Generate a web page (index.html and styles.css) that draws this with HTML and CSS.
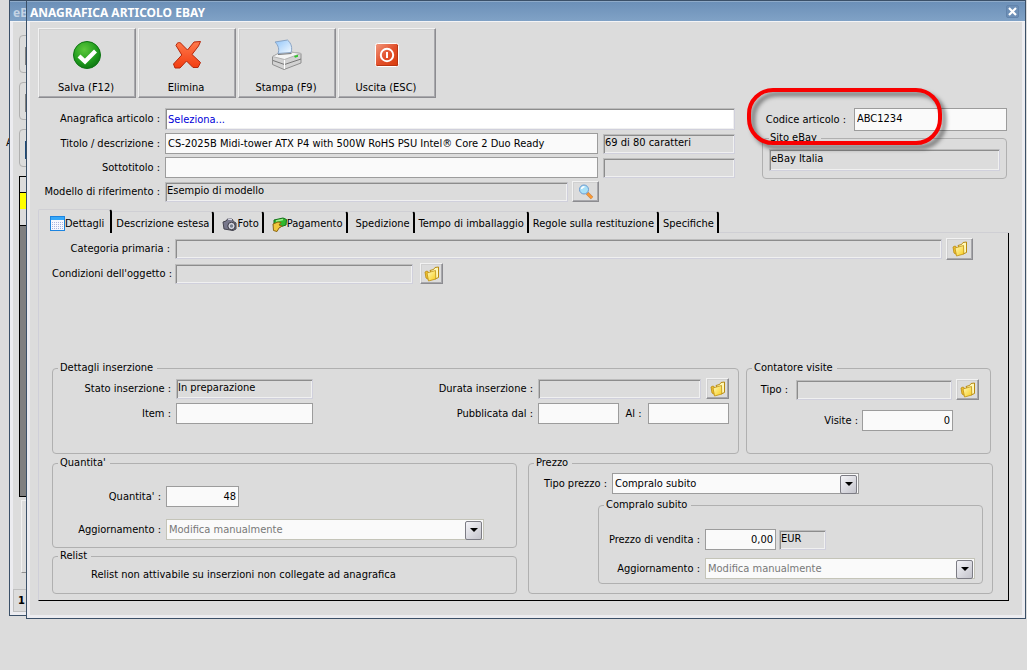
FILE: index.html
```html
<!DOCTYPE html>
<html lang="it">
<head>
  <meta charset="UTF-8">
  <title>Anagrafica articolo eBay</title>
  <link rel="stylesheet" href="styles.css">
</head>
<body>
  <svg class="defs" aria-hidden="true">
    <defs>
      <linearGradient id="gold" x1="0" y1="0" x2="1" y2="1">
        <stop offset="0" stop-color="#fffbc0"/>
        <stop offset="1" stop-color="#f8cc18"/>
      </linearGradient>
      <radialGradient id="green" cx="0.4" cy="0.3" r="0.8">
        <stop offset="0" stop-color="#5cc83c"/>
        <stop offset="0.6" stop-color="#1e9a1c"/>
        <stop offset="1" stop-color="#0a6a10"/>
      </radialGradient>
      <linearGradient id="red" x1="0" y1="0" x2="1" y2="1">
        <stop offset="0" stop-color="#f29a80"/>
        <stop offset="0.5" stop-color="#e2512c"/>
        <stop offset="1" stop-color="#d83a08"/>
      </linearGradient>
      <linearGradient id="cross" x1="0" y1="0" x2="0" y2="1">
        <stop offset="0" stop-color="#ff7a4c"/>
        <stop offset="1" stop-color="#f23c10"/>
      </linearGradient>
      <linearGradient id="sheet" x1="0" y1="0" x2="1" y2="1">
        <stop offset="0" stop-color="#8fc4fa"/>
        <stop offset="1" stop-color="#f4faff"/>
      </linearGradient>
    </defs>
    <symbol id="folder" viewBox="0 0 16 16">
      <path d="M1 6l2-1 1.500 1v7.500L2 12z" fill="#f0c030" stroke="#b88a10" stroke-width="0.800"/>
      <path d="M6 4.500L9.500 3.500l1.500-2L14.500 1v10.500L11 13z" fill="#fff8b8" stroke="#b88a10"/>
      <path d="M3 7l8.500-2.500.3 8.500L4.500 15z" fill="url(#gold)" stroke="#c09010" stroke-width="0.800"/>
    </symbol>
  </svg>

  <div class="desktop">
    <span class="desktop-text">A</span>

    <div class="window back">
      <div class="titlebar">eB</div>
      <div class="back-body">
        <div class="back-box"><i></i></div>
        <div class="back-box"><i></i></div>
        <div class="back-box"><i class="blue"></i></div>
        <div class="back-grid">
          <div class="head"></div>
          <div class="sel"></div>
          <div class="line"></div>
        </div>
        <div class="back-frame"></div>
      </div>
      <div class="back-status">1</div>
    </div>

    <div class="window front">
      <div class="titlebar">
        <h1>ANAGRAFICA ARTICOLO EBAY</h1>
        <button class="close" aria-label="Chiudi">
          <svg width="9" height="9" viewBox="0 0 9 9"><path d="M1 1l7 7M8 1L1 8" stroke="#fff" stroke-width="2.200"/></svg>
        </button>
      </div>

      <div class="content">
        <div class="toolbar">
          <button>
            <svg width="32" height="32" viewBox="0 0 32 32">
              <circle cx="17" cy="16" r="13.500" fill="url(#green)" stroke="#0d7412"/>
              <path d="M9 17L15 22.500 25.500 12" fill="none" stroke="#fff" stroke-width="4.200"/>
            </svg>
            Salva (F12)
          </button>
          <button>
            <svg width="32" height="32" viewBox="0 0 32 32">
              <path d="M7 4.500c2-1.800 4-.8 5.300 1.300L17.500 11 24 3l6.500-.5-2 4.500-6.500 8.500 8.500 8-2.500 5h-5l-6.500-6.500-6.500 7H5L3.500 25l8.300-9L6 6.500z" fill="url(#cross)" stroke="#b5260a"/>
            </svg>
            Elimina
          </button>
          <button>
            <svg width="32" height="32" viewBox="0 0 32 32">
              <path d="M2.500 17.500L13 12l18 2.500V24L14 30.500 2.500 25.500z" fill="#d2d2d2" stroke="#8e8e8e"/>
              <path d="M2.500 17.500L13 12l18 2.500-16.500 6z" fill="#f4f4f4" stroke="#b4b4b4"/>
              <path d="M3 21.500l11.500 4L31 20" fill="none" stroke="#777"/>
              <path d="M14.500 21v9" stroke="#fff"/>
              <path d="M8 14.500c1.500-4 .5-8-3-11.500L17.500 1c4 3.500 5 8 3.500 12.500z" fill="url(#sheet)" stroke="#8aa4c4"/>
              <path d="M8 15.500l13.500-1" stroke="#777"/>
              <path d="M24 17l4-1.200v2l-3 1z" fill="#2fc52a"/>
            </svg>
            Stampa (F9)
          </button>
          <button>
            <svg width="32" height="32" viewBox="0 0 32 32">
              <rect x="5.500" y="4.500" width="23" height="23" rx="2" fill="url(#red)" stroke="#fff"/>
              <path d="M6.500 26.500h21V6" fill="none" stroke="#b03010" stroke-width="0.800"/>
              <circle cx="17" cy="16" r="6.200" fill="none" stroke="#fff" stroke-width="2"/>
              <path d="M17 13v6" stroke="#fff" stroke-width="2"/>
            </svg>
            Uscita (ESC)
          </button>
        </div>

        <div class="header">
          <div class="header-main">
            <div class="row">
              <label for="anagrafica">Anagrafica articolo :</label>
              <input id="anagrafica" class="sunken pick grow" value="Seleziona..." readonly>
            </div>
            <div class="row">
              <label for="titolo">Titolo / descrizione :</label>
              <input id="titolo" class="grow" value="CS-2025B Midi-tower ATX P4 with 500W RoHS PSU Intel® Core 2 Duo Ready">
              <input class="sunken counter" value="69 di 80 caratteri" aria-label="Caratteri titolo" readonly>
            </div>
            <div class="row">
              <label for="sottotitolo">Sottotitolo :</label>
              <input id="sottotitolo" class="grow">
              <input class="sunken counter" aria-label="Caratteri sottotitolo" readonly>
            </div>
            <div class="row model">
              <label for="modello">Modello di riferimento :</label>
              <input id="modello" class="sunken grow" value="Esempio di modello" readonly>
              <button class="small wide" aria-label="Cerca modello">
                <svg width="16" height="16" viewBox="0 0 16 16">
                  <path d="M9 9l5 5" stroke="#c88850" stroke-width="3.400"/>
                  <path d="M9.500 9.500l4.500 4.500" stroke="#ff9a30" stroke-width="2"/>
                  <circle cx="6" cy="5.500" r="4.500" fill="#a8e0f8" stroke="#6b9bd0"/>
                  <path d="M3.500 5a3 3 0 0 1 3-2.200" fill="none" stroke="#fff" stroke-width="1.500"/>
                </svg>
              </button>
            </div>
          </div>

          <div class="header-side">
            <div class="row">
              <label for="codice">Codice articolo :</label>
              <input id="codice" class="grow" value="ABC1234">
            </div>
            <fieldset class="site">
              <legend>Sito eBay</legend>
              <input class="sunken" value="eBay Italia" aria-label="Sito eBay" readonly>
            </fieldset>
            <div class="callout"></div>
          </div>
        </div>

        <div class="tabs" role="tablist">
          <button role="tab" class="active" aria-selected="true">
            <svg width="15" height="15" viewBox="0 0 15 15">
              <rect x="0.500" y="0.500" width="14" height="14" fill="#f6f8ff" stroke="#1c84e0"/>
              <path d="M1 2.500h13" stroke="#36a8f8" stroke-width="3"/>
              <path d="M2 6.500h12M2 8.500h12M2 10.500h12M2 12.500h12" stroke="#a8b4e0" stroke-dasharray="1 1"/>
            </svg>Dettagli
          </button>
          <button role="tab">Descrizione estesa</button>
          <button role="tab" class="spaced">
            <svg width="15" height="15" viewBox="0 0 15 15">
              <path d="M1 5l3-1 2-2.500 4 .5 1.500 2.500L14 6v6l-3 1.500L2 12z" fill="#77778c" stroke="#44444f"/>
              <path d="M6 2l4 .5" stroke="#dcdce8" stroke-width="1.500"/>
              <circle cx="9.500" cy="9" r="3.700" fill="#d8d8e4" stroke="#33333c"/>
              <circle cx="9.500" cy="9" r="1.700" fill="#77808f"/>
            </svg>Foto
          </button>
          <button role="tab" class="spaced">
            <svg width="15" height="15" viewBox="0 0 15 15">
              <path d="M2 3l9-2 3.500 1.500L14 8l-6 2-6-1z" fill="#2eb82e" stroke="#14701a"/>
              <path d="M4 4l7-1.500" stroke="#a4f090" stroke-width="1.500"/>
              <path d="M1 7l5-2 3 .5-2 2.500 3 1-3 2-2 3.500-3.500-1z" fill="#f0c83c" stroke="#8c6410"/>
            </svg>Pagamento
          </button>
          <button role="tab" class="spaced">Spedizione</button>
          <button role="tab">Tempo di imballaggio</button>
          <button role="tab">Regole sulla restituzione</button>
          <button role="tab">Specifiche</button>
        </div>

        <div class="panel">
          <div class="row category">
            <label for="categoria">Categoria primaria :</label>
            <input id="categoria" class="sunken grow" readonly>
            <button class="small wide" aria-label="Scegli categoria"><svg width="16" height="16"><use href="#folder"/></svg></button>
          </div>
          <div class="row condition">
            <label for="condizioni">Condizioni dell'oggetto :</label>
            <input id="condizioni" class="sunken" readonly>
            <button class="small" aria-label="Scegli condizioni"><svg width="16" height="16"><use href="#folder"/></svg></button>
          </div>

          <div class="groups top">
            <fieldset class="listing">
              <legend>Dettagli inserzione</legend>
              <div class="row">
                <label for="stato">Stato inserzione :</label>
                <input id="stato" class="sunken state" value="In preparazione" readonly>
                <label for="durata" class="grow">Durata inserzione :</label>
                <div class="pair">
                  <input id="durata" class="sunken grow" readonly>
                  <button class="small" aria-label="Scegli durata"><svg width="16" height="16"><use href="#folder"/></svg></button>
                </div>
              </div>
              <div class="row">
                <label for="item">Item :</label>
                <input id="item" class="state">
                <label for="dal" class="grow">Pubblicata dal :</label>
                <div class="pair">
                  <input id="dal" class="date">
                  <label for="al">Al :</label>
                  <input id="al" class="date">
                </div>
              </div>
            </fieldset>

            <fieldset class="visits">
              <legend>Contatore visite</legend>
              <div class="row">
                <label for="tipo">Tipo :</label>
                <input id="tipo" class="sunken grow" readonly>
                <button class="small" aria-label="Scegli contatore"><svg width="16" height="16"><use href="#folder"/></svg></button>
              </div>
              <div class="row count">
                <label for="visite">Visite :</label>
                <input id="visite" class="number" value="0">
              </div>
            </fieldset>
          </div>

          <div class="groups bottom">
            <div class="column">
              <fieldset class="quantity">
                <legend>Quantita'</legend>
                <div class="row">
                  <label for="quantita">Quantita' :</label>
                  <input id="quantita" class="number" value="48">
                </div>
                <div class="row">
                  <label for="agg-quantita">Aggiornamento :</label>
                  <div class="combo grow">
                    <select id="agg-quantita" disabled><option>Modifica manualmente</option></select>
                  </div>
                </div>
              </fieldset>
              <fieldset class="relist">
                <legend>Relist</legend>
                <p>Relist non attivabile su inserzioni non collegate ad anagrafica</p>
              </fieldset>
            </div>

            <fieldset class="price">
              <legend>Prezzo</legend>
              <div class="row">
                <label for="tipo-prezzo">Tipo prezzo :</label>
                <div class="combo kind">
                  <select id="tipo-prezzo"><option>Compralo subito</option></select>
                </div>
              </div>
              <fieldset class="buy-now">
                <legend>Compralo subito</legend>
                <div class="row">
                  <label for="vendita">Prezzo di vendita :</label>
                  <input id="vendita" class="number" value="0,00">
                  <input class="sunken currency" value="EUR" aria-label="Valuta" readonly>
                </div>
                <div class="row">
                  <label for="agg-prezzo">Aggiornamento :</label>
                  <div class="combo grow">
                    <select id="agg-prezzo" disabled><option>Modifica manualmente</option></select>
                  </div>
                </div>
              </fieldset>
            </fieldset>
          </div>
        </div>
      </div>
    </div>
  </div>
</body>
</html>
```
FILE: styles.css
```css
* {
  box-sizing: border-box;
}
body {
  margin: 0;
  background: #dcdcdc;
  color: #000;
  font-family: "DejaVu Sans Condensed", Tahoma, "Noto Sans", sans-serif;
  font-size: 11px;
  line-height: 14px;
}
button, input, select {
  font: inherit;
  color: inherit;
  margin: 0;
}
.defs {
  position: absolute;
  width: 0;
  height: 0;
}
.desktop {
  position: relative;
  min-height: 100vh;
}
.desktop-text {
  position: absolute;
  left: 6px;
  top: 136px;
}

/* windows */
.window {
  background: #dcdcdc;
  border: 1px solid #3b5068;
  box-shadow: inset 0 0 0 3px #ececf0;
}
.titlebar {
  display: flex;
  align-items: center;
  justify-content: space-between;
  height: 21px;
  padding: 3px 6px 0 3px;
  border-top: 1px solid #8fabc9;
  border-bottom: 1px solid #f4f4f6;
  background: linear-gradient(#6c90b8, #80a2c6);
  color: #fff;
  font-family: "Noto Sans", Tahoma, sans-serif;
  font-size: 12px;
  font-weight: bold;
}
.titlebar h1 {
  margin: 0;
  font-size: inherit;
}
.close {
  display: flex;
  align-items: center;
  justify-content: center;
  width: 13px;
  height: 13px;
  margin-bottom: 3px;
  padding: 0;
  border: 1px solid #6284ac;
  border-radius: 2px;
  background: #6d8fb6;
}
.front {
  position: relative;
  margin: 0 1px 0 26px;
}
.content {
  padding: 6px 16px 17px 11px;
}

/* window behind */
.back {
  position: absolute;
  left: 9px;
  top: 0;
  width: 400px;
}
.back .titlebar {
  color: #c4d3e4;
}
.back-body {
  height: 567px;
  padding: 13px 9px 0;
}
.back-box {
  height: 38px;
  margin-bottom: 9px;
  padding: 11px 5px;
  border: 1px solid #b0b0b0;
  border-radius: 4px;
}
.back-box i {
  display: block;
  height: 18px;
  border-left: 1px solid #808080;
}
.back-box i.blue {
  border-color: #1e4a78;
}
.back-grid {
  height: 321px;
  border: 1px solid #000;
  background: #808080;
}
.back-grid .head {
  height: 16px;
  background: #dcdcdc;
  border-bottom: 1px solid #000;
}
.back-grid .sel {
  height: 16px;
  background: #ffff00;
}
.back-grid .line {
  height: 17px;
  background: #dcdcdc;
  border-bottom: 1px solid #000;
}
.back-frame {
  height: 73px;
  margin: 3px 2px 0;
  border: 1px solid #f0f0f0;
  border-bottom-color: #909090;
}
.back-status {
  height: 23px;
  margin: 0 3px 3px;
  padding: 4px;
  border: 1px solid #c0c0c0;
  font-weight: bold;
}

/* toolbar */
.toolbar {
  display: flex;
  gap: 2px;
}
.toolbar button {
  display: flex;
  flex-direction: column;
  align-items: center;
  justify-content: space-between;
  width: 98px;
  height: 70px;
  padding: 10px 2px 2px 0;
}
.toolbar button, .small {
  border: 1px solid;
  border-color: #f2f2f2 #8c8c90 #8c8c90 #f2f2f2;
  box-shadow: inset -1px -1px #a8a8ac, inset 1px 1px #d0d0d0;
  background: #dcdcdc;
}
.small {
  display: flex;
  flex: none;
  align-items: center;
  justify-content: center;
  width: 23px;
  height: 21px;
  padding: 0;
}
.small.wide {
  width: 27px;
}

/* fields */
.row {
  display: flex;
  align-items: center;
}
.row > label {
  flex: none;
  padding-right: 5px;
  text-align: right;
  white-space: nowrap;
}
.row > .grow, .pair > .grow {
  flex: 1;
  min-width: 0;
}
input {
  height: 21px;
  padding: 0 2px;
  border: 1px solid #9c9c9c;
  border-radius: 0;
  background: #fafafa;
}
.sunken {
  height: 20px;
  padding: 0 1px 3px;
  border: 1px solid;
  border-color: #bcbcbc #d0d0dc #d0d0dc #bcbcbc;
  box-shadow: inset 1px 1px #8c8c8c, inset -1px -1px #f0f0f0;
  background: #dcdcdc;
}
.sunken.pick {
  height: 22px;
  padding: 0 2px;
  background: #fff;
  color: #0000d8;
}
.number {
  text-align: right;
}
.combo {
  position: relative;
  display: flex;
}
.combo select {
  appearance: none;
  width: 100%;
  height: 21px;
  padding: 0 20px 0 2px;
  border: 1px solid #9c9c9c;
  border-radius: 0;
  background: #fafafa;
}
.combo select:disabled {
  border-color: #c4c4b8;
  color: #787878;
  opacity: 1;
}
.combo::before {
  content: "";
  position: absolute;
  right: 2px;
  top: 2px;
  width: 15px;
  height: 17px;
  border: 1px solid #7c7c84;
  border-radius: 2px;
  background: linear-gradient(135deg, #f4f4f8, #c4c4cc);
  pointer-events: none;
}
.combo::after {
  content: "";
  position: absolute;
  right: 6px;
  top: 9px;
  border: 4px solid transparent;
  border-top-color: #000;
  border-bottom: 0;
  pointer-events: none;
}
fieldset {
  min-width: 0;
  margin: 0;
  padding: 0;
  border: 1px solid #b0b0b0;
  border-radius: 4px;
}
legend {
  margin-left: 5px;
  padding: 0 4px 0 2px;
}

/* article header */
.header {
  display: flex;
  gap: 27px;
  margin-top: 10px;
  padding-right: 2px;
}
.header-main {
  display: flex;
  flex: 1;
  flex-direction: column;
  gap: 3px;
}
.header-main .row > label {
  width: 127px;
}
.counter {
  width: 132px;
  margin-left: 5px;
}
.model {
  padding-right: 136px;
}
.model .small {
  margin-left: 4px;
}
.header-side {
  position: relative;
  width: 245px;
}
.header-side .row > label {
  width: 92px;
  padding-right: 8px;
}
#codice {
  height: 23px;
  padding-bottom: 3px;
}
.site {
  padding: 4px 6px 7px;
}
.site legend {
  margin-left: 0;
  padding-left: 1px;
}
.site .sunken {
  display: block;
  width: 100%;
  height: 22px;
}
.callout {
  position: absolute;
  left: -15px;
  top: -20px;
  width: 195px;
  height: 57px;
  border: 4px solid #f80000;
  border-radius: 26px;
  filter: drop-shadow(4px 4px 2px rgba(0, 0, 0, 0.5));
  pointer-events: none;
}

/* tabs */
.tabs {
  display: flex;
  align-items: flex-end;
  height: 24px;
  margin-top: 7px;
}
.tabs button {
  display: flex;
  align-items: center;
  height: 22px;
  padding: 3px 3px 0 4px;
  border: 0;
  border-top: 1px solid #cfcfd4;
  border-right: 2px solid #000;
  border-radius: 2px 3px 0 0;
  background: none;
  white-space: nowrap;
}
.tabs .spaced {
  padding-left: 8px;
}
.tabs .active {
  height: 24px;
  padding: 4px 6px 0 11px;
  border-left: 1px solid #cfcfd8;
}
.tabs::after {
  content: "";
  flex: 1;
  border-bottom: 1px solid #cfcfd4;
}
.panel {
  padding: 5px 15px 6px 13px;
  border: solid #cfcfd8;
  border-width: 0 0 0 1px;
  border-right: 1px solid #000;
  border-bottom: 1px solid #000;
}
.category > label, .condition > label {
  width: 123px;
}
.category {
  padding-right: 20px;
}
.category .small {
  height: 22px;
  margin-left: 4px;
}
.condition {
  margin-top: 3px;
}
.condition input {
  width: 238px;
}
.condition .small {
  margin-left: 7px;
}

/* groups */
.groups {
  display: flex;
  gap: 7px;
}
.groups.top {
  margin: 77px 2px 2px 0;
}
.groups.bottom {
  display: grid;
  grid-template-columns: 1fr 1fr;
  gap: 11px;
}
.listing {
  flex: 1;
  padding: 3px 9px 29px 0;
}
.listing .row + .row {
  margin-top: 4px;
}
.listing .row > label:first-child {
  width: 123px;
}
.state {
  width: 137px;
}
.pair {
  display: flex;
  align-items: center;
  justify-content: space-between;
  width: 191px;
}
.pair .small {
  margin-left: 5px;
}
.date {
  width: 81px;
}
.visits {
  width: 245px;
  padding: 4px 11px 0 0;
}
.visits .row > label {
  width: 49px;
  padding-right: 8px;
}
.visits .small {
  margin-left: 4px;
}
.visits .count {
  justify-content: flex-end;
  margin-top: 10px;
  padding-right: 26px;
}
.count .number {
  width: 91px;
}
.visits .count > label {
  padding-right: 4px;
}
.column {
  display: flex;
  flex-direction: column;
  gap: 1px;
}
.quantity {
  padding: 16px 32px 7px 0;
}
.quantity .row > label {
  width: 113px;
}
.quantity .row + .row {
  margin-top: 12px;
}
.quantity .number {
  width: 73px;
}
.relist p {
  margin: 0;
  padding: 5px 0 11px 38px;
}
.price {
  padding: 3px 9px 8px 0;
}
.price .row > label {
  width: 83px;
}
.kind {
  width: 247px;
}
.price .buy-now {
  margin: 4px 0 0 69px;
  padding: 17px 7px 4px 0;
}
.price .buy-now .row > label {
  width: 106px;
}
.buy-now .number {
  width: 71px;
}
.currency {
  width: 47px;
  margin-left: 3px;
}
.buy-now .row + .row {
  margin-top: 8px;
}
```
